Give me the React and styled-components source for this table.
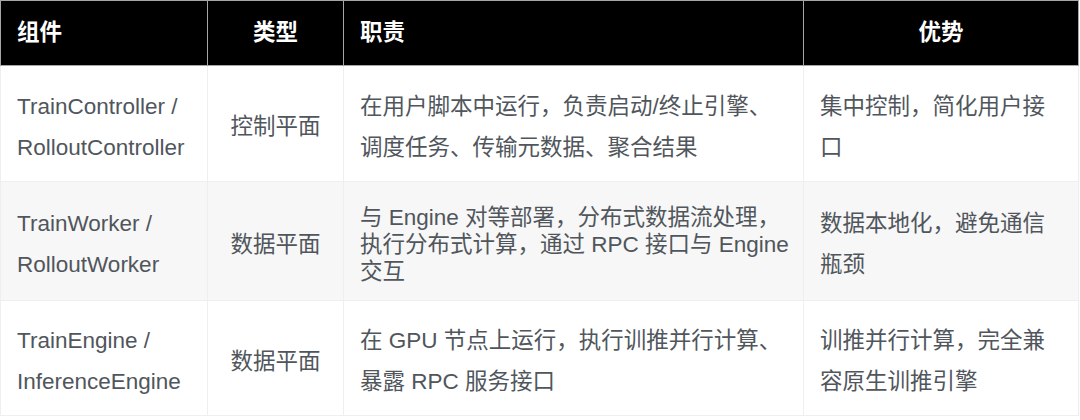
import React from "react";
import styled, { createGlobalStyle } from "styled-components";

const Global = createGlobalStyle`
  html, body { margin: 0; padding: 0; background: #ffffff; }
  body { font-family: "Liberation Sans", "Noto Sans CJK SC", sans-serif; }
`;

const Table = styled.table`
  width: 1078px;
  border-collapse: collapse;
  table-layout: fixed;
  font-family: "Liberation Sans", "Noto Sans CJK SC", sans-serif;
  font-size: 22.5px;
`;

const HeadCell = styled.th`
  background: #000000;
  color: #ffffff;
  font-weight: 700;
  height: 64px;
  padding: 0 16px;
  line-height: 32px;
  border: 1px solid #a6a6a6;
  text-align: ${(p) => (p.$center ? "center" : "left")};
  vertical-align: middle;
`;

const Row = styled.tr`
  background: ${(p) => (p.$shade ? "#f7f7f7" : "#ffffff")};
`;

const Cell = styled.td`
  color: #50565c;
  padding: 6px ${(p) => (p.$wide ? 10 : 16)}px 0 16px;
  height: ${(p) => p.$h}px;
  line-height: ${(p) => (p.$tight ? 27 : 41)}px;
  border: 1px solid #efefef;
  text-align: ${(p) => (p.$center ? "center" : "left")};
  vertical-align: middle;
`;

const rows = [
  {
    h: 109,
    comp: ["TrainController /", "RolloutController"],
    type: "控制平面",
    duty: "在用户脚本中运行，负责启动/终止引擎、调度任务、传输元数据、聚合结果",
    adv: "集中控制，简化用户接口",
  },
  {
    h: 112,
    shade: true,
    comp: ["TrainWorker /", "RolloutWorker"],
    type: "数据平面",
    duty: "与 Engine 对等部署，分布式数据流处理，执行分布式计算，通过 RPC 接口与 Engine 交互",
    tight: true,
    adv: "数据本地化，避免通信瓶颈",
  },
  {
    h: 108,
    comp: ["TrainEngine /", "InferenceEngine"],
    type: "数据平面",
    duty: "在 GPU 节点上运行，执行训推并行计算、暴露 RPC 服务接口",
    adv: "训推并行计算，完全兼容原生训推引擎",
  },
];

export default function App() {
  return (
    <>
      <Global />
      <Table>
        <colgroup>
          <col style={{ width: 207 }} />
          <col style={{ width: 136 }} />
          <col style={{ width: 460 }} />
          <col style={{ width: 275 }} />
        </colgroup>
        <thead>
          <tr>
            <HeadCell>组件</HeadCell>
            <HeadCell $center>类型</HeadCell>
            <HeadCell>职责</HeadCell>
            <HeadCell $center>优势</HeadCell>
          </tr>
        </thead>
        <tbody>
          {rows.map((r, i) => (
            <Row key={i} $shade={r.shade}>
              <Cell $h={r.h}>
                {r.comp[0]}
                <br />
                {r.comp[1]}
              </Cell>
              <Cell $h={r.h} $center>
                {r.type}
              </Cell>
              <Cell $h={r.h} $tight={r.tight} $wide>
                {r.duty}
              </Cell>
              <Cell $h={r.h}>{r.adv}</Cell>
            </Row>
          ))}
        </tbody>
      </Table>
    </>
  );
}
